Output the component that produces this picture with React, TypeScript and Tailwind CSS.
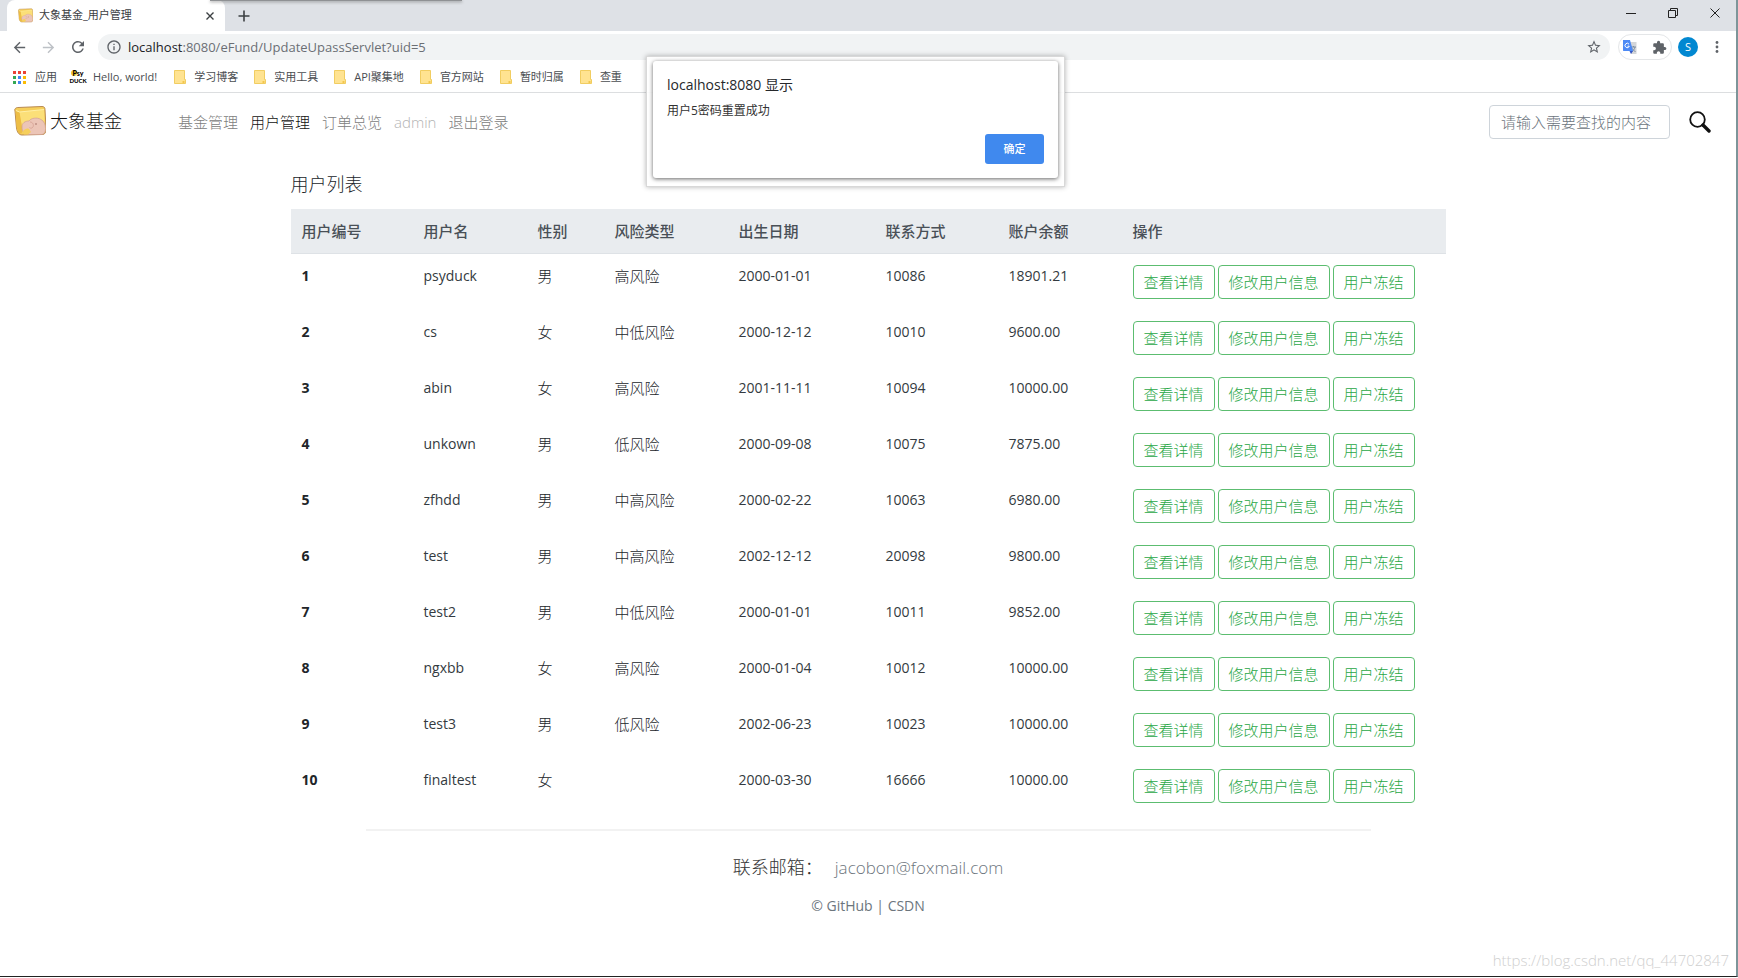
import { useState } from 'react';
import type { ReactNode } from 'react';
import { MdArrowBack, MdArrowForward, MdExtension, MdInfoOutline, MdRefresh, MdStarBorder } from 'react-icons/md';

type User = {
  id: number;
  name: string;
  gender: string;
  risk: string;
  birthday: string;
  phone: string;
  balance: string;
};

const USERS: User[] = [
  { id: 1, name: 'psyduck', gender: '男', risk: '高风险', birthday: '2000-01-01', phone: '10086', balance: '18901.21' },
  { id: 2, name: 'cs', gender: '女', risk: '中低风险', birthday: '2000-12-12', phone: '10010', balance: '9600.00' },
  { id: 3, name: 'abin', gender: '女', risk: '高风险', birthday: '2001-11-11', phone: '10094', balance: '10000.00' },
  { id: 4, name: 'unkown', gender: '男', risk: '低风险', birthday: '2000-09-08', phone: '10075', balance: '7875.00' },
  { id: 5, name: 'zfhdd', gender: '男', risk: '中高风险', birthday: '2000-02-22', phone: '10063', balance: '6980.00' },
  { id: 6, name: 'test', gender: '男', risk: '中高风险', birthday: '2002-12-12', phone: '20098', balance: '9800.00' },
  { id: 7, name: 'test2', gender: '男', risk: '中低风险', birthday: '2000-01-01', phone: '10011', balance: '9852.00' },
  { id: 8, name: 'ngxbb', gender: '女', risk: '高风险', birthday: '2000-01-04', phone: '10012', balance: '10000.00' },
  { id: 9, name: 'test3', gender: '男', risk: '低风险', birthday: '2002-06-23', phone: '10023', balance: '10000.00' },
  { id: 10, name: 'finaltest', gender: '女', risk: '', birthday: '2000-03-30', phone: '16666', balance: '10000.00' },
];

const COLUMNS = [
  { label: '用户编号', width: 'w-[122px]' },
  { label: '用户名', width: 'w-[114px]' },
  { label: '性别', width: 'w-[77px]' },
  { label: '风险类型', width: 'w-[124px]' },
  { label: '出生日期', width: 'w-[147px]' },
  { label: '联系方式', width: 'w-[123px]' },
  { label: '账户余额', width: 'w-[124px]' },
  { label: '操作', width: 'w-auto' },
];

const NAV_ITEMS = [
  { label: '基金管理', color: 'text-[#808080]' },
  { label: '用户管理', color: 'text-[#111]' },
  { label: '订单总览', color: 'text-[#808080]' },
  { label: 'admin', color: 'text-[#b3b3b3]' },
  { label: '退出登录', color: 'text-[#808080]' },
];

const FOLDERS = ['学习博客', '实用工具', 'API聚集地', '官方网站', '暂时归属', '查重'];

const ACTIONS = ['查看详情', '修改用户信息', '用户冻结'];

function ElephantLogo({ className }: { className: string }) {
  return (
    <svg viewBox="0 0 32 30" className={className} aria-hidden="true">
      <path d="M1 5C0 3 2 1.500 4 1.500L28 .5c2 0 3 1 3 3l1 19c0 4-1 6-4 6L8 29c-3 0-5-3-5.500-7z" fill="#f6cf5b" stroke="#b98a52" strokeWidth="1" />
      <path d="M5 6 30 3.500l.5 14L8 21z" fill="#fbdf78" />
      <path d="M1.500 4.500C3 6 4 6 5.500 6l3 18c0 2-1 4-2.500 3.500C4 27 3 24 2.500 21z" fill="#edbd45" />
      <path d="M2 4.500 5.500 6 30 3.500" fill="none" stroke="#fff0a8" strokeWidth="1" />
      <path d="M8 21c0-4 3-6 7-6 2-3 8-4 12-1.500 3 1.500 4.500 5 4.500 9 0 4-1.500 6-4.500 6H14l-1.500-2c-3 1-4.500-2-4.500-5.500z" fill="#ecc5b7" stroke="#d3a092" strokeWidth=".7" />
      <path d="M16 16c3 0 4 3 3 5-1 1.500-2.500 1.500-3.500.5" fill="none" stroke="#d3a092" strokeWidth=".8" />
      <path d="M9 25c2-2 4-3 6-2l2 3-3 2.500H10z" fill="#f6cf5b" />
      <circle cx="22" cy="18" r=".8" fill="#a06b62" />
    </svg>
  );
}

function AppsIcon() {
  const colors = ['#ea4335', '#ea4335', '#ea4335', '#34a853', '#4285f4', '#fbbc04', '#34a853', '#4285f4', '#fbbc04'];
  return (
    <svg viewBox="0 0 13 13" className="h-[13px] w-[13px]" aria-hidden="true">
      {colors.map((c, i) => (
        <rect key={i} x={(i % 3) * 5} y={Math.floor(i / 3) * 5} width="3" height="3" fill={c} />
      ))}
    </svg>
  );
}

function PsyduckIcon() {
  return (
    <span className="flex w-4 flex-col items-center font-['Lato',sans-serif] text-[7px] leading-[7px] font-black text-black" aria-hidden="true">
      <span className="relative">
        <span className="absolute top-0 -left-px h-[6px] w-[6px] rounded-full bg-[#f3c62f]" />
        <span className="relative">Psy</span>
      </span>
      <span className="text-[6px]">DUCK</span>
    </span>
  );
}

function FolderIcon() {
  return (
    <svg viewBox="0 0 12 14" className="h-[14px] w-3" aria-hidden="true">
      <path d="M.5.5h10v9h1v4H.5z" fill="#ffe391" stroke="#f1cd61" strokeWidth="1" />
      <path d="M8.500 11h2v2h-2z" fill="#f3c64d" />
    </svg>
  );
}

function TranslateIcon() {
  return (
    <svg viewBox="0 0 16 16" className="h-4 w-4" aria-hidden="true">
      <path d="M6 3h8.500v12H9z" fill="#d4d6d9" />
      <path d="M9 8h5M11.500 7v1M13 8c-.5 2-1.500 3.500-3 4.500M10.500 9.500c.5 1.500 1.500 2.500 3 3" fill="none" stroke="#7d8ea3" strokeWidth="1" />
      <path d="M1 1h7l3 11H1.500L1 11.500z" fill="#4d8af5" />
      <path d="M7.500 12H11l-2 3z" fill="#3455c4" />
      <path d="M7 5.200a2.200 2.200 0 1 0 .3 2H5.500" fill="none" stroke="#fff" strokeWidth="1" />
    </svg>
  );
}

function SearchIcon() {
  return (
    <svg viewBox="0 0 22 22" className="h-[22px] w-[22px]" fill="none" stroke="#111" aria-hidden="true">
      <circle cx="8.500" cy="8.500" r="7.300" strokeWidth="1.800" />
      <path d="m14 14 6 6" strokeWidth="3.400" strokeLinecap="round" />
    </svg>
  );
}

function TabStrip() {
  return (
    <div className="relative flex h-[31px] items-stretch justify-between bg-[#dee1e6]">
      <div className="absolute top-0 left-[210px] h-px w-[252px] bg-[#8f9194] shadow-[0_1px_3px_#666]" />
      <div className="flex pl-[7px]">
        <div className="flex w-[218px] items-center rounded-t-lg bg-white pr-[7px] pl-[11px]">
          <ElephantLogo className="h-[15px] w-[15px]" />
          <span className="ml-[6px] flex-1 text-[11px] text-[#3c4043]">大象基金_用户管理</span>
          <button type="button" aria-label="关闭标签页" className="flex h-4 w-4 items-center justify-center">
            <svg viewBox="0 0 8 8" className="h-2 w-2" stroke="#3c4043" strokeWidth="1.400">
              <path d="m.5.500 7 7m0-7-7 7" />
            </svg>
          </button>
        </div>
        <button type="button" aria-label="新标签页" className="flex w-[38px] items-center justify-center">
          <svg viewBox="0 0 12 12" className="h-3 w-3" stroke="#3c4043" strokeWidth="1.600">
            <path d="M6 .5v11M.5 6h11" />
          </svg>
        </button>
      </div>
      <div className="flex h-[26px] text-[#222]">
        <button type="button" aria-label="最小化" className="flex w-[42px] items-center justify-center">
          <svg viewBox="0 0 10 10" className="h-[10px] w-[10px]" stroke="currentColor"><path d="M0 5.500h10" /></svg>
        </button>
        <button type="button" aria-label="还原" className="flex w-[42px] items-center justify-center">
          <svg viewBox="0 0 10 10" className="h-[10px] w-[10px]" stroke="currentColor" fill="none">
            <path d="M.5 2.500h7v7h-7zM2.500 2.500v-2h7v7h-2" />
          </svg>
        </button>
        <button type="button" aria-label="关闭" className="flex w-[42px] items-center justify-center">
          <svg viewBox="0 0 10 10" className="h-[10px] w-[10px]" stroke="currentColor"><path d="m.5.500 9 9m0-9-9 9" /></svg>
        </button>
      </div>
    </div>
  );
}

function ToolButton({ label, children }: { label: string; children: ReactNode }) {
  return (
    <button type="button" aria-label={label} className="flex h-6 w-[29px] items-center justify-center text-[#5f6368]">
      {children}
    </button>
  );
}

function Toolbar() {
  return (
    <div className="flex h-8 items-center pr-2 pl-[5px]">
      <ToolButton label="后退"><MdArrowBack className="h-[17px] w-[17px]" /></ToolButton>
      <ToolButton label="前进"><MdArrowForward className="h-[17px] w-[17px] text-[#bdc1c6]" /></ToolButton>
      <ToolButton label="重新加载"><MdRefresh className="h-[18px] w-[18px]" /></ToolButton>
      <div className="ml-[6px] flex h-[26px] flex-1 items-center rounded-full bg-[#f1f3f4] pr-2 pl-2 text-[#5f6368]">
        <MdInfoOutline className="h-4 w-4" />
        <div className="ml-[6px] flex-1 text-[13px] leading-5 text-[#6b6f74]">
          <span className="text-[#202124]">localhost</span>:8080/eFund/UpdateUpassServlet?uid=5
        </div>
        <button type="button" aria-label="收藏"><MdStarBorder className="h-4 w-4" /></button>
      </div>
      <div className="ml-2 flex h-[26px] w-[54px] items-center justify-between rounded-full border border-[#e4e6e8] pr-1 pl-[3px]">
        <button type="button" aria-label="翻译"><TranslateIcon /></button>
        <button type="button" aria-label="扩展程序"><MdExtension className="h-[15px] w-[15px] text-[#5f6368]" /></button>
      </div>
      <button type="button" className="ml-[6px] h-5 w-5 rounded-full bg-[#0288d1] text-center text-[11px] leading-5 text-white">S</button>
      <button type="button" aria-label="菜单" className="ml-2 flex h-6 w-[22px] items-center justify-center">
        <svg viewBox="0 0 4 12" className="h-3 w-1" fill="#5f6368">
          <circle cx="2" cy="1.500" r="1.400" />
          <circle cx="2" cy="6" r="1.400" />
          <circle cx="2" cy="10.500" r="1.400" />
        </svg>
      </button>
    </div>
  );
}

function BookmarksBar() {
  return (
    <div className="flex h-[30px] items-center border-b border-[#dcdee0] pb-px pl-[13px] text-[11px] text-[#4a4d51]">
      <a href="#apps" className="flex items-center gap-[9px]"><AppsIcon />应用</a>
      <a href="#hello" className="ml-[13px] flex items-center gap-[7px]"><PsyduckIcon />Hello, world!</a>
      <div className="ml-[17px] flex gap-4">
        {FOLDERS.map((name) => (
          <button type="button" key={name} className="flex items-center gap-2"><FolderIcon />{name}</button>
        ))}
      </div>
    </div>
  );
}

function AlertDialog({ onClose }: { onClose: () => void }) {
  return (
    <div className="absolute top-14 left-1/2 w-[419px] -translate-x-[222px] border border-[#d8d8d8] bg-white/90 p-[6px] pt-1 pb-2 shadow-[0_0_5px_rgba(0,0,0,0.3)]">
      <div role="alertdialog" aria-labelledby="alert-title" className="rounded-[3px] bg-white px-[14px] pt-[14px] pb-[14px] shadow-[0_1px_4px_rgba(0,0,0,0.6)]">
        <h2 id="alert-title" className="text-sm leading-5 text-[#26282b]">localhost:8080 显示</h2>
        <p className="mt-[6px] text-xs leading-5 text-[#333]">用户5密码重置成功</p>
        <div className="mt-[13px] flex justify-end">
          <button type="button" onClick={onClose} className="h-[30px] w-[59px] rounded-[3px] bg-[#4089ee] text-[11px] font-medium text-white">
            确定
          </button>
        </div>
      </div>
    </div>
  );
}

function Navbar() {
  return (
    <nav className="flex h-[58px] items-center pr-[25px] pl-[14px]">
      <a href="#home" className="flex items-center gap-1 pb-[2px] text-lg font-light text-[#111]">
        <ElephantLogo className="h-[30px] w-8" />
        大象基金
      </a>
      <div className="ml-14 flex flex-1 gap-3 text-[15px] leading-[22px] font-light">
        {NAV_ITEMS.map((item) => (
          <a key={item.label} href="#nav" className={item.color}>{item.label}</a>
        ))}
      </div>
      <form className="flex items-center gap-[19px]" onSubmit={(e) => e.preventDefault()}>
        <input
          type="text"
          aria-label="查找"
          placeholder="请输入需要查找的内容"
          className="h-[34px] w-[181px] rounded border border-[#ced4da] px-[11px] text-[15px] font-light placeholder:text-[#6c757d]"
        />
        <button type="submit" aria-label="搜索"><SearchIcon /></button>
      </form>
    </nav>
  );
}

function UserTable() {
  return (
    <table className="w-full table-fixed border-collapse text-left text-[#333a40]">
      <thead>
        <tr className="h-11 border-b border-[#dee2e6] bg-[#e9ecef] text-[15px] text-[#495057]">
          {COLUMNS.map((col) => (
            <th key={col.label} scope="col" className={`${col.width} px-[11px] font-medium`}>{col.label}</th>
          ))}
        </tr>
      </thead>
      <tbody>
        {USERS.map((user) => (
          <tr key={user.id} className="align-top text-sm leading-[22px]">
            <th scope="row" className="p-[11px] font-bold text-[#212529]">{user.id}</th>
            <td className="p-[11px]">{user.name}</td>
            <td className="p-[11px] text-[15px] font-light text-[#212529]">{user.gender}</td>
            <td className="p-[11px] text-[15px] font-light text-[#212529]">{user.risk}</td>
            <td className="p-[11px]">{user.birthday}</td>
            <td className="p-[11px]">{user.phone}</td>
            <td className="p-[11px]">{user.balance}</td>
            <td className="p-[11px]">
              <div className="flex gap-[3px]">
                {ACTIONS.map((action) => (
                  <button
                    type="button"
                    key={action}
                    className="h-[34px] rounded border border-[#5cbd70] px-[10px] text-[15px] font-light whitespace-nowrap text-[#28a745] hover:bg-[#28a745] hover:text-white"
                  >
                    {action}
                  </button>
                ))}
              </div>
            </td>
          </tr>
        ))}
      </tbody>
    </table>
  );
}

function Footer() {
  return (
    <footer className="mx-auto mt-[15px] w-full max-w-[1005px] flex-1 border-t-2 border-[#f2f2f2] pt-6 text-center">
      <p className="text-lg leading-6 font-light text-[#333]">
        联系邮箱：<a href="mailto:jacobon@foxmail.com" className="ml-3 text-[17px] text-[#6c757d]">jacobon@foxmail.com</a>
      </p>
      <p className="mt-[15px] text-sm leading-[22px] text-[#6c757d]">
        © <a href="#github">GitHub</a> | <a href="#csdn">CSDN</a>
      </p>
    </footer>
  );
}

export default function App() {
  const [alertOpen, setAlertOpen] = useState(true);

  return (
    <div className="min-h-screen bg-white pb-px font-['Open_Sans','Noto_Sans_CJK_SC',sans-serif]">
      <div className="relative flex min-h-[calc(100vh-1px)] flex-col border-r-2 border-b border-r-[#7d9599] border-b-[#222]">
        <TabStrip />
        <Toolbar />
        <BookmarksBar />
        <Navbar />
        <main className="mx-auto w-full max-w-[1155px] pt-5">
          <h1 className="mb-3 text-lg leading-[26px] font-light text-[#212529]">用户列表</h1>
          <UserTable />
        </main>
        <Footer />
        {alertOpen && <AlertDialog onClose={() => setAlertOpen(false)} />}
        <span className="absolute right-[7px] bottom-1 text-[15px] leading-6 font-light text-[#cfcfcf]">
          https://blog.csdn.net/qq_44702847
        </span>
      </div>
    </div>
  );
}
